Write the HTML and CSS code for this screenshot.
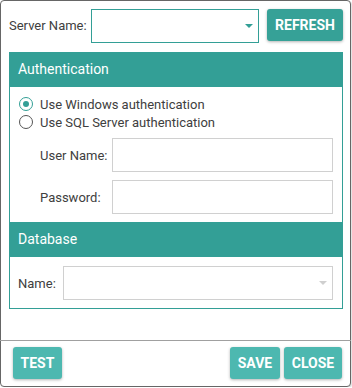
FILE: index.html
```html
<!DOCTYPE html>
<html>
<head>
<meta charset="utf-8">
<link rel="stylesheet" href="styles.css">
</head>
<body>
<div class="window">
  <div class="content">
    <div class="server-row">
      <label class="server-label">Server Name:</label>
      <div class="select select-active">
        <span class="arrow arrow-teal"></span>
      </div>
      <button class="btn btn-dark">REFRESH</button>
    </div>

    <div class="panel">
      <div class="panel-head">Authentication</div>
      <div class="panel-body auth-body">
        <div class="radio-row">
          <span class="radio checked"></span>
          <span class="radio-label">Use Windows authentication</span>
        </div>
        <div class="radio-row">
          <span class="radio"></span>
          <span class="radio-label">Use SQL Server authentication</span>
        </div>
        <div class="field-row first-field">
          <label class="field-label">User Name:</label>
          <div class="input"></div>
        </div>
        <div class="field-row">
          <label class="field-label">Password:</label>
          <div class="input"></div>
        </div>
      </div>
      <div class="panel-head">Database</div>
      <div class="panel-body db-body">
        <div class="db-row">
          <label class="db-label">Name:</label>
          <div class="select select-disabled">
            <span class="arrow arrow-gray"></span>
          </div>
        </div>
      </div>
    </div>
  </div>

  <div class="footer">
    <button class="btn btn-light btn-test">TEST</button>
    <div class="spacer"></div>
    <button class="btn btn-light btn-save">SAVE</button>
    <button class="btn btn-light btn-close">CLOSE</button>
  </div>
</div>
</body>
</html>
```

FILE: styles.css
```css
html, body {
  margin: 0;
  padding: 0;
  background: #ffffff;
}

body {
  font-family: Roboto, "Liberation Sans", Arial, sans-serif;
  font-size: 13px;
  color: #404040;
}

.window {
  width: 351px;
  height: 387px;
  box-sizing: border-box;
  border: 1px solid #666666;
  border-radius: 4px;
  box-shadow: 1px 1px 1px rgba(0, 0, 0, 0.12);
  display: flex;
  flex-direction: column;
  background: #ffffff;
}

.content {
  flex: 1;
  padding: 8px 7px 0 8px;
}

.server-row {
  display: flex;
  align-items: flex-start;
}

.server-label {
  width: 82px;
  height: 34px;
  line-height: 34px;
}

.select {
  position: relative;
  box-sizing: border-box;
  height: 34px;
  background: #ffffff;
}

.select-active {
  width: 168px;
  border: 1px solid #339f96;
}

.select-disabled {
  flex: 1;
  height: 34px;
  border: 1px solid #d0d0d0;
}

.arrow {
  position: absolute;
  top: 14px;
  right: 5px;
  width: 0;
  height: 0;
  border-left: 4px solid transparent;
  border-right: 4px solid transparent;
}

.arrow-teal {
  border-top: 4px solid #339f96;
}

.arrow-gray {
  border-top: 4px solid #cfcfcf;
}

.btn {
  height: 32px;
  box-sizing: border-box;
  border: none;
  border-radius: 3px;
  color: #ffffff;
  font-family: Roboto, "Liberation Sans", Arial, sans-serif;
  font-weight: 700;
  font-size: 14px;
  padding: 0;
  box-shadow: 0 1px 3px rgba(0, 0, 0, 0.3);
  text-align: center;
}

.btn-dark {
  width: 76px;
  margin-left: 8px;
  background: #36a197;
}

.btn-light {
  background: #4db8b0;
}

.panel {
  margin-top: 9px;
}

.panel-head {
  height: 35px;
  line-height: 35px;
  padding-left: 9px;
  background: #339f96;
  color: #ffffff;
  font-size: 14px;
}

.panel-body {
  border: 1px solid #339f96;
  border-top: none;
  border-bottom: none;
}

.auth-body {
  padding: 8px 9px 8px 9px;
}

.db-body {
  border-bottom: 1px solid #339f96;
  padding: 9px 9px 8px 8px;
}

.radio-row {
  display: flex;
  align-items: center;
  height: 18px;
}

.radio {
  width: 14px;
  height: 14px;
  box-sizing: border-box;
  border: 1.5px solid #555555;
  border-radius: 50%;
  margin-right: 7px;
  position: relative;
  flex: none;
}

.radio.checked {
  border-color: #339f96;
}

.radio.checked::after {
  content: "";
  position: absolute;
  left: 2.5px;
  top: 2.5px;
  width: 6px;
  height: 6px;
  border-radius: 50%;
  background: #339f96;
}

.field-row {
  display: flex;
  align-items: center;
  margin-top: 8px;
  padding-left: 21px;
}

.first-field {
  margin-top: 7px;
}

.field-label {
  width: 72px;
}

.input {
  flex: 1;
  height: 34px;
  box-sizing: border-box;
  border: 1px solid #d0d0d0;
}

.db-row {
  display: flex;
  align-items: center;
}

.db-label {
  width: 45px;
}

.footer {
  border-top: 1px solid #a0a0a0;
  padding: 6px 9px 7px 13px;
  display: flex;
  align-items: flex-start;
  margin-left: -1px;
  margin-right: -1px;
}

.spacer {
  flex: 1;
}

.btn-test {
  width: 49px;
}

.btn-save {
  width: 50px;
  margin-right: 4px;
}

.btn-close {
  width: 58px;
}
```
